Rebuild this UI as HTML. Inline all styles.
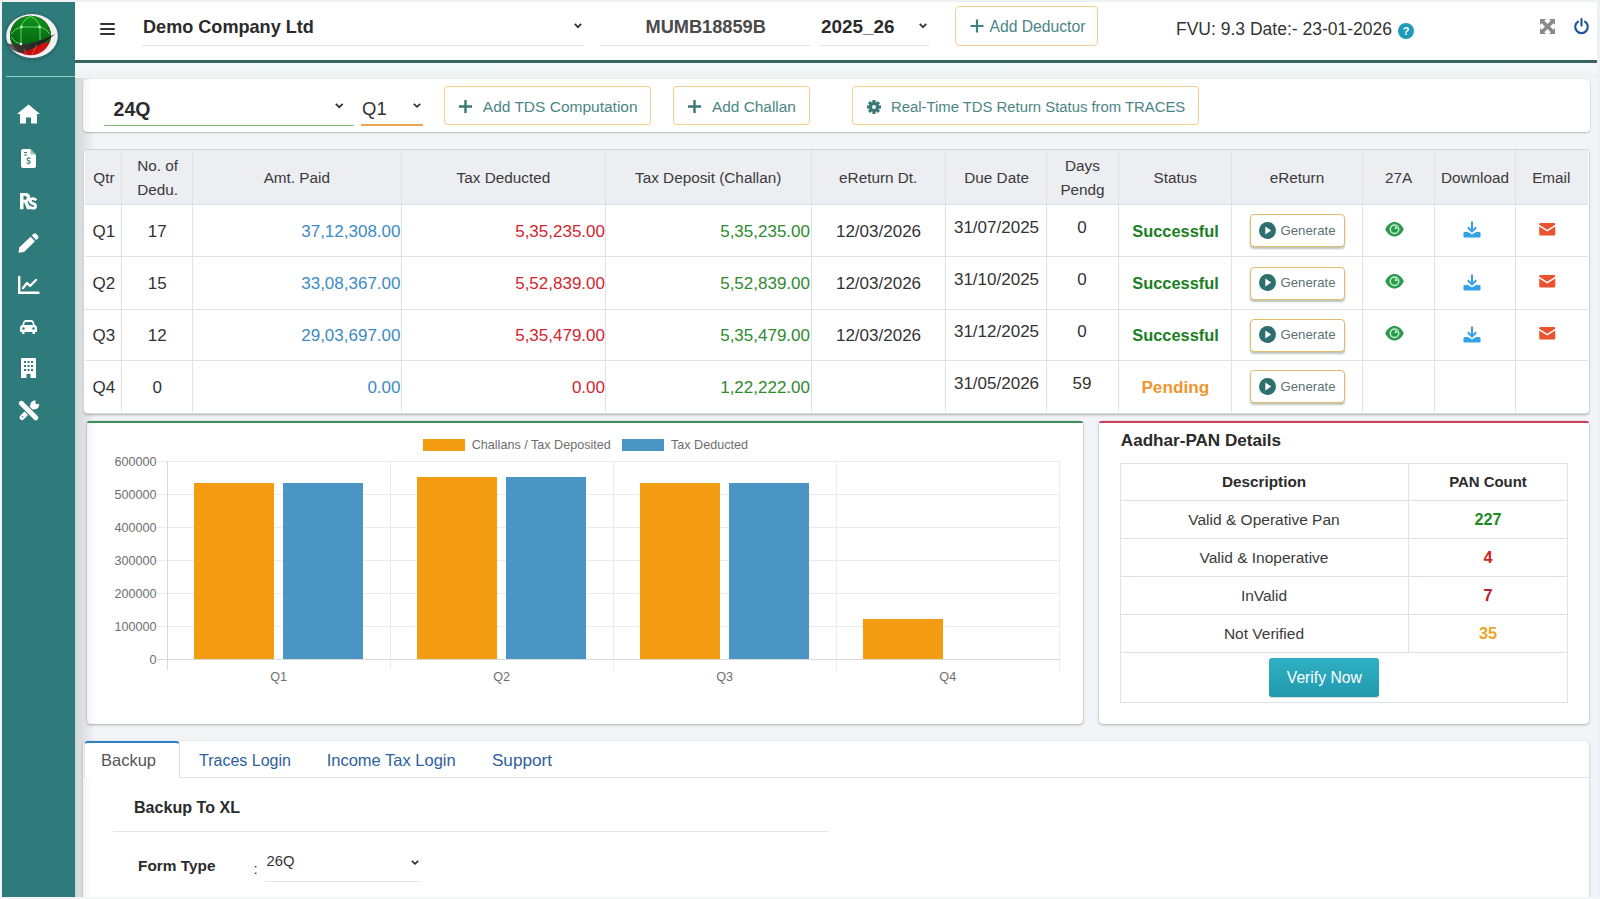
<!DOCTYPE html>
<html><head><meta charset="utf-8"><style>
*{box-sizing:border-box;margin:0;padding:0}
html,body{width:1600px;height:899px;overflow:hidden}
body{position:relative;background:#f3f4f7;font-family:"Liberation Sans",sans-serif;color:#333}
.a{position:absolute}
.t{position:absolute;white-space:nowrap;line-height:1}
svg{position:absolute;overflow:visible}
</style></head><body>
<div class="a" style="left:0px;top:0px;width:1600px;height:899px;background:#f3f4f7"></div>
<div class="a" style="left:0px;top:0px;width:1600px;height:2px;background:#eef0f2"></div>
<div class="a" style="left:75px;top:62px;width:20px;height:837px;background:linear-gradient(90deg,#b9d3d3 0,#d5d9dc 1.5px,#e2e4e7 55%,#f3f4f7)"></div>
<div class="a" style="left:75px;top:62.5px;width:1522px;height:15.5px;background:linear-gradient(#f3fafb,#eff1f3)"></div>
<div class="a" style="left:2px;top:2px;width:73px;height:897px;background:#2f7b7b"></div>
<div class="a" style="left:75px;top:2px;width:1522px;height:58px;background:#fff"></div>
<div class="a" style="left:75px;top:60px;width:1522px;height:2.799999999999997px;background:#386363"></div>
<div class="a" style="left:1597px;top:0px;width:3px;height:899px;background:#eef0f3"></div>
<div class="a" style="left:0px;top:897px;width:1600px;height:2px;background:#f1f4f5"></div>
<div class="a" style="left:6px;top:75.5px;width:69px;height:1.5px;background:#8fd0cc"></div>
<svg style="left:0;top:0" width="75" height="75" viewBox="0 0 75 75">
<defs>
<radialGradient id="gg" cx="0.45" cy="0.3" r="0.75"><stop offset="0" stop-color="#0f9a1c"/><stop offset="1" stop-color="#05610f"/></radialGradient>
<radialGradient id="rg" cx="0.6" cy="0.75" r="0.6"><stop offset="0" stop-color="#e41414"/><stop offset="1" stop-color="#7a0808"/></radialGradient>
<linearGradient id="sg" x1="0" y1="0" x2="1" y2="0"><stop offset="0" stop-color="#3d3d3d" stop-opacity="0.75"/><stop offset="0.5" stop-color="#2a2a2a"/><stop offset="1" stop-color="#1a1a1a"/></linearGradient>
<clipPath id="gc"><ellipse cx="30.5" cy="35.5" rx="20.5" ry="19.8"/></clipPath>
<filter id="bl" x="-20%" y="-20%" width="140%" height="140%"><feGaussianBlur stdDeviation="1.6"/></filter>
</defs>
<ellipse cx="32" cy="37" rx="27.5" ry="23.5" fill="#134040" opacity="0.35" filter="url(#bl)"/>
<ellipse cx="32" cy="36" rx="25.8" ry="22" fill="#f2f0f0"/>
<g clip-path="url(#gc)">
<rect x="0" y="0" width="75" height="75" fill="url(#rg)"/>
<path d="M0 0 H75 V33 Q40 49 6 44Z" fill="url(#gg)"/>
</g>
<path d="M6.5 43 Q26 49 55.5 34 Q38 48.5 20 53 Q10 50.5 6.5 43Z" fill="url(#sg)"/>
<g stroke="#86ec86" stroke-width="0.8" fill="none" opacity="0.95">
<path d="M21 44 V27 Q24 18.5 30.5 16.5 Q37 18.5 40 27 V40"/>
<path d="M21 27 H40"/>
<path d="M11 34 Q15 28.5 21 27 M40 27 Q47 29 49.5 34"/>
<path d="M11 37 Q15 43 21 44"/>
</g>
<g stroke="#f07070" stroke-width="0.7" fill="none" opacity="0.8"><path d="M24 49 L27 55 M37 44 L32 55"/></g>
<circle cx="21.5" cy="27" r="1.4" fill="#b8f5b8"/><circle cx="39.5" cy="27" r="1.4" fill="#b8f5b8"/><circle cx="21" cy="44" r="1.3" fill="#e8f8e8"/>
</svg>
<svg style="left:17px;top:104px" width="23" height="20" viewBox="0 0 23 20"><path d="M11.5 0.5 L23 10 L20 10 L20 19.5 L14 19.5 L14 13.5 L9 13.5 L9 19.5 L3 19.5 L3 10 L0 10 Z" fill="#fff"/></svg>
<svg style="left:21px;top:149px" width="15" height="19" viewBox="0 0 15 19"><path d="M2 0 H9.5 L15 5.5 V17 Q15 19 13 19 H2 Q0 19 0 17 V2 Q0 0 2 0Z" fill="#fff"/><path d="M9.5 0 V5.5 H15" fill="#2f7b7b" opacity="0.5"/><g stroke="#317d7b" stroke-width="1.1" fill="none"><path d="M3 3.5 H6 M3 6 H6"/><path d="M9.3 9.8 Q8.8 9 7.5 9 Q6 9 6 10.3 Q6 11.3 7.5 11.6 Q9.2 12 9.2 13.2 Q9.2 14.4 7.5 14.4 Q6.2 14.4 5.8 13.6 M7.5 8 V9 M7.5 14.4 V15.5"/></g></svg>
<svg style="left:20px;top:192.5px" width="17.5" height="16.5" viewBox="0 0 17.5 16.5"><path d="M0 0 H5.6 Q10.2 0 10.2 4.6 Q10.2 7.8 7.6 8.9 L11 16.3 H7 L4.3 9.5 H3.5 V16.3 H0Z M3.5 2.9 V6.8 H5.3 Q6.8 6.8 6.8 4.85 Q6.8 2.9 5.3 2.9Z" fill="#fff" fill-rule="evenodd"/><path d="M16.2 7.4 Q15.1 5.6 12.9 5.6 Q10.3 5.6 10.3 7.9 Q10.3 9.6 12.9 10.4 Q15.6 11.2 15.6 13.2 Q15.6 15.2 12.9 15.2 Q10.5 15.2 9.4 13.3" stroke="#fff" stroke-width="2.7" fill="none"/></svg>
<svg style="left:18px;top:233px" width="21" height="20" viewBox="0 0 21 20"><path d="M15.5 0.8 Q16.8 -0.3 18 0.8 L20 2.8 Q21 4 20 5.2 L18.2 7 L13.8 2.6Z" fill="#fff"/><path d="M12.6 3.8 L17 8.2 L6 19 L0.5 19.8 L1.3 14.5Z" fill="#fff"/></svg>
<svg style="left:18px;top:277px" width="21" height="17" viewBox="0 0 21 17"><path d="M1.2 0 V15.8 H20.5" stroke="#fff" stroke-width="2.4" fill="none" stroke-linecap="round"/><path d="M5 11 L9 6 L12 9 L18 3" stroke="#fff" stroke-width="2.4" fill="none" stroke-linecap="round" stroke-linejoin="round"/></svg>
<svg style="left:20px;top:320px" width="17" height="14" viewBox="0 0 17 14"><path d="M3.5 1.5 Q4 0 5.5 0 H11.5 Q13 0 13.5 1.5 L14.8 5 Q17 5.5 17 8 V12 H15 V14 H12.5 V12 H4.5 V14 H2 V12 H0 V8 Q0 5.5 2.2 5Z M4 5 H13 L12 2 H5Z" fill="#fff" fill-rule="evenodd"/><circle cx="3.5" cy="8.5" r="1.2" fill="#2f7b7b"/><circle cx="13.5" cy="8.5" r="1.2" fill="#2f7b7b"/></svg>
<svg style="left:21px;top:358px" width="15" height="20" viewBox="0 0 15 20"><path d="M1 0 H14 Q15 0 15 1 V20 H9.5 V16 H5.5 V20 H0 V1 Q0 0 1 0Z" fill="#fff"/><g fill="#2f7b7b"><rect x="3" y="3" width="2" height="2"/><rect x="6.5" y="3" width="2" height="2"/><rect x="10" y="3" width="2" height="2"/><rect x="3" y="7" width="2" height="2"/><rect x="6.5" y="7" width="2" height="2"/><rect x="10" y="7" width="2" height="2"/><rect x="3" y="11" width="2" height="2"/><rect x="6.5" y="11" width="2" height="2"/><rect x="10" y="11" width="2" height="2"/></g></svg>
<svg style="left:18px;top:400px" width="22" height="22" viewBox="0 0 22 22"><path d="M4 17.5 L15.5 6" stroke="#fff" stroke-width="5" stroke-linecap="round"/><circle cx="16.8" cy="4.8" r="4.4" fill="#fff"/><circle cx="19.6" cy="2" r="2.3" fill="#2f7b7b"/><path d="M3.3 3.3 L17.8 17.8" stroke="#2f7b7b" stroke-width="7.2" stroke-linecap="round"/><path d="M3.3 3.3 L17.8 17.8" stroke="#fff" stroke-width="5" stroke-linecap="round"/><circle cx="4.5" cy="16.8" r="0.8" fill="#2f7b7b"/></svg>
<div class="a" style="left:100px;top:23px;width:15px;height:2.1999999999999993px;background:#333;border-radius:1px"></div>
<div class="a" style="left:100px;top:28px;width:15px;height:2.1999999999999993px;background:#333;border-radius:1px"></div>
<div class="a" style="left:100px;top:33px;width:15px;height:2.200000000000003px;background:#333;border-radius:1px"></div>
<div class="t" style="left:143.00px;top:18.00px;font-size:18.1px;font-weight:bold;color:#2b2b2b;">Demo Company Ltd</div>
<div class="a" style="left:142px;top:45px;width:442px;height:1px;background:#e4e6e9"></div>
<div class="a" style="left:600px;top:45px;width:211px;height:1px;background:#e4e6e9"></div>
<div class="a" style="left:820px;top:45px;width:109px;height:1px;background:#e4e6e9"></div>
<svg style="left:573.5px;top:23.3px" width="8" height="5" viewBox="0 0 8 5"><path d="M0.8 0.8 L4.0 4.2 L7.2 0.8" stroke="#333" stroke-width="1.8" fill="none"/></svg>
<div class="t" style="left:645.50px;top:18.00px;font-size:18.2px;font-weight:bold;color:#4a4a4a;">MUMB18859B</div>
<div class="t" style="left:821.00px;top:18.00px;font-size:18.9px;font-weight:bold;color:#2b2b2b;">2025_26</div>
<svg style="left:919px;top:23.3px" width="8" height="5" viewBox="0 0 8 5"><path d="M0.8 0.8 L4.0 4.2 L7.2 0.8" stroke="#333" stroke-width="1.8" fill="none"/></svg>
<div class="a" style="left:954.5px;top:6px;width:143.5px;height:39.5px;border:1px solid #f0d08e;border-radius:4px;background:#fff"></div>
<svg style="left:969.5px;top:19px" width="14" height="14" viewBox="0 0 14 14"><path d="M7 0.5 V13.5 M0.5 7 H13.5" stroke="#3f7f7e" stroke-width="2.2"/></svg>
<div class="t" style="left:989.50px;top:19.00px;font-size:15.7px;font-weight:normal;color:#4b8584;">Add Deductor</div>
<div class="t" style="left:1176.00px;top:21.00px;font-size:17.5px;font-weight:normal;color:#333;">FVU: 9.3 Date:- 23-01-2026</div>
<svg style="left:1397.5px;top:22.5px" width="16" height="16" viewBox="0 0 16 16"><circle cx="8" cy="8" r="8" fill="#1f9ab8"/><text x="8" y="12" font-family="Liberation Sans" font-weight="bold" font-size="11" fill="#fff" text-anchor="middle">?</text></svg>
<svg style="left:1540px;top:19px" width="15" height="15" viewBox="0 0 15 15"><g fill="#8a8a8a"><path d="M0 0 H6 L4.3 1.7 L7.5 4.9 L10.7 1.7 L9 0 H15 V6 L13.3 4.3 L10.1 7.5 L13.3 10.7 L15 9 V15 H9 L10.7 13.3 L7.5 10.1 L4.3 13.3 L6 15 H0 V9 L1.7 10.7 L4.9 7.5 L1.7 4.3 L0 6Z"/></g></svg>
<svg style="left:1573.5px;top:17.8px" width="15" height="15.2" viewBox="0 0 15 15.2"><path d="M4 3.6 A6.3 6.3 0 1 0 11 3.6" stroke="#1e519e" stroke-width="2.1" fill="none" stroke-linecap="round"/><path d="M7.5 1 V7.6" stroke="#1e519e" stroke-width="2.1" stroke-linecap="round"/></svg>
<div class="a" style="left:83px;top:78.5px;width:1506.5px;height:53.5px;background:#fff;border-radius:4px;box-shadow:inset 12px 0 10px -10px rgba(0,0,0,.07),0 1px 2px rgba(0,0,0,.22),0 0 1px rgba(0,0,0,.2)"></div>
<div class="t" style="left:113.60px;top:100.00px;font-size:19.5px;font-weight:bold;color:#2b2b2b;">24Q</div>
<div class="a" style="left:104px;top:124.6px;width:249.5px;height:1.6000000000000085px;background:#86bd80"></div>
<svg style="left:335.3px;top:102.8px" width="8.5" height="5" viewBox="0 0 8.5 5"><path d="M0.8 0.8 L4.25 4.2 L7.7 0.8" stroke="#333" stroke-width="1.8" fill="none"/></svg>
<div class="t" style="left:362.00px;top:100.00px;font-size:18.5px;font-weight:normal;color:#333;">Q1</div>
<div class="a" style="left:361px;top:124.3px;width:61.60000000000002px;height:2.200000000000003px;background:#e9a553"></div>
<svg style="left:412.9px;top:102.6px" width="8" height="4.6" viewBox="0 0 8 4.6"><path d="M0.8 0.8 L4.0 3.8 L7.2 0.8" stroke="#333" stroke-width="1.8" fill="none"/></svg>
<div class="a" style="left:444px;top:86.4px;width:207.39999999999998px;height:38.3px;border:1px solid #f2d18f;border-radius:4px;background:#fff;box-shadow:0 0 1px rgba(240,200,120,.5)"></div>
<svg style="left:459px;top:99.8px" width="13" height="13" viewBox="0 0 13 13"><path d="M6.5 0 V13 M0 6.5 H13" stroke="#3a7877" stroke-width="2.4"/></svg>
<div class="t" style="left:482.80px;top:99.00px;font-size:15.5px;font-weight:normal;color:#4b8584;">Add TDS Computation</div>
<div class="a" style="left:672.8px;top:86.4px;width:137.0px;height:38.3px;border:1px solid #f2d18f;border-radius:4px;background:#fff;box-shadow:0 0 1px rgba(240,200,120,.5)"></div>
<svg style="left:688.2px;top:99.8px" width="13" height="13" viewBox="0 0 13 13"><path d="M6.5 0 V13 M0 6.5 H13" stroke="#3a7877" stroke-width="2.4"/></svg>
<div class="t" style="left:712.00px;top:99.00px;font-size:15.4px;font-weight:normal;color:#4b8584;">Add Challan</div>
<div class="a" style="left:852px;top:86.4px;width:346.79999999999995px;height:38.3px;border:1px solid #f2d18f;border-radius:4px;background:#fff;box-shadow:0 0 1px rgba(240,200,120,.5)"></div>
<svg style="left:866.5px;top:99.5px" width="14" height="14" viewBox="-7 -7 14 14"><g fill="#3a7877"><circle r="5"/><rect x="-1.6" y="-7" width="3.2" height="3.5" transform="rotate(0)"/><rect x="-1.6" y="-7" width="3.2" height="3.5" transform="rotate(45)"/><rect x="-1.6" y="-7" width="3.2" height="3.5" transform="rotate(90)"/><rect x="-1.6" y="-7" width="3.2" height="3.5" transform="rotate(135)"/><rect x="-1.6" y="-7" width="3.2" height="3.5" transform="rotate(180)"/><rect x="-1.6" y="-7" width="3.2" height="3.5" transform="rotate(225)"/><rect x="-1.6" y="-7" width="3.2" height="3.5" transform="rotate(270)"/><rect x="-1.6" y="-7" width="3.2" height="3.5" transform="rotate(315)"/></g><circle r="2" fill="#fff"/></svg>
<div class="t" style="left:891.00px;top:100.00px;font-size:14.85px;font-weight:normal;color:#4b8584;">Real-Time TDS Return Status from TRACES</div>
<div class="a" style="left:84px;top:149.5px;width:1504.5px;height:263.0px;background:#fff;border-radius:4px;box-shadow:0 0 0 1px #d3d6da,0 2px 3px rgba(0,0,0,.28)"></div>
<div class="a" style="left:84.5px;top:150px;width:1503.5px;height:54.5px;background:#eceef1;border-radius:4px 4px 0 0"></div>
<div class="a" style="left:120.8px;top:150px;width:1.0px;height:262px;background:#dfe2e5"></div>
<div class="a" style="left:191.9px;top:150px;width:1.0px;height:262px;background:#dfe2e5"></div>
<div class="a" style="left:400.8px;top:150px;width:1.0px;height:262px;background:#dfe2e5"></div>
<div class="a" style="left:605.0px;top:150px;width:1.0px;height:262px;background:#dfe2e5"></div>
<div class="a" style="left:810.5px;top:150px;width:1.0px;height:262px;background:#dfe2e5"></div>
<div class="a" style="left:945.0px;top:150px;width:1.0px;height:262px;background:#dfe2e5"></div>
<div class="a" style="left:1046.0px;top:150px;width:1.0px;height:262px;background:#dfe2e5"></div>
<div class="a" style="left:1117.5px;top:150px;width:1.0px;height:262px;background:#dfe2e5"></div>
<div class="a" style="left:1230.5px;top:150px;width:1.0px;height:262px;background:#dfe2e5"></div>
<div class="a" style="left:1362.0px;top:150px;width:1.0px;height:262px;background:#dfe2e5"></div>
<div class="a" style="left:1433.5px;top:150px;width:1.0px;height:262px;background:#dfe2e5"></div>
<div class="a" style="left:1515.0px;top:150px;width:1.0px;height:262px;background:#dfe2e5"></div>
<div class="a" style="left:84.5px;top:204.0px;width:1503.5px;height:1.0px;background:#dfe2e5"></div>
<div class="a" style="left:84.5px;top:256.2px;width:1503.5px;height:1.0px;background:#dfe2e5"></div>
<div class="a" style="left:84.5px;top:308.5px;width:1503.5px;height:1.0px;background:#dfe2e5"></div>
<div class="a" style="left:84.5px;top:360.1px;width:1503.5px;height:1.0px;background:#dfe2e5"></div>
<div class="a" style="left:84.5px;top:203.6px;width:1503.5px;height:1.5999999999999943px;background:#dcdfe3"></div>
<div class="t" style="left:-296.10px;width:800px;text-align:center;top:170.00px;font-size:15.3px;font-weight:normal;color:#3a3a3a;">Qtr</div>
<div class="t" style="left:-242.40px;width:800px;text-align:center;top:158.00px;font-size:15.3px;font-weight:normal;color:#3a3a3a;">No. of</div>
<div class="t" style="left:-242.40px;width:800px;text-align:center;top:182.00px;font-size:15.3px;font-weight:normal;color:#3a3a3a;">Dedu.</div>
<div class="t" style="left:-103.20px;width:800px;text-align:center;top:170.00px;font-size:15.3px;font-weight:normal;color:#3a3a3a;">Amt. Paid</div>
<div class="t" style="left:103.40px;width:800px;text-align:center;top:170.00px;font-size:15.3px;font-weight:normal;color:#3a3a3a;">Tax Deducted</div>
<div class="t" style="left:308.20px;width:800px;text-align:center;top:170.00px;font-size:15.3px;font-weight:normal;color:#3a3a3a;">Tax Deposit (Challan)</div>
<div class="t" style="left:478.20px;width:800px;text-align:center;top:170.00px;font-size:15.3px;font-weight:normal;color:#3a3a3a;">eReturn Dt.</div>
<div class="t" style="left:596.60px;width:800px;text-align:center;top:170.00px;font-size:15.3px;font-weight:normal;color:#3a3a3a;">Due Date</div>
<div class="t" style="left:682.50px;width:800px;text-align:center;top:158.00px;font-size:15.3px;font-weight:normal;color:#3a3a3a;">Days</div>
<div class="t" style="left:682.50px;width:800px;text-align:center;top:182.00px;font-size:15.3px;font-weight:normal;color:#3a3a3a;">Pendg</div>
<div class="t" style="left:775.30px;width:800px;text-align:center;top:170.00px;font-size:15.3px;font-weight:normal;color:#3a3a3a;">Status</div>
<div class="t" style="left:897.00px;width:800px;text-align:center;top:170.00px;font-size:15.3px;font-weight:normal;color:#3a3a3a;">eReturn</div>
<div class="t" style="left:998.50px;width:800px;text-align:center;top:170.00px;font-size:15.3px;font-weight:normal;color:#3a3a3a;">27A</div>
<div class="t" style="left:1075.00px;width:800px;text-align:center;top:170.00px;font-size:15.3px;font-weight:normal;color:#3a3a3a;">Download</div>
<div class="t" style="left:1151.30px;width:800px;text-align:center;top:170.00px;font-size:15.3px;font-weight:normal;color:#3a3a3a;">Email</div>
<div class="t" style="left:-296.20px;width:800px;text-align:center;top:223.00px;font-size:17.0px;font-weight:normal;color:#333;">Q1</div>
<div class="t" style="left:-242.70px;width:800px;text-align:center;top:223.00px;font-size:17.0px;font-weight:normal;color:#333;">17</div>
<div class="t" style="left:-399.50px;width:800px;text-align:right;top:223.00px;font-size:17.0px;font-weight:normal;color:#3d8ac4;">37,12,308.00</div>
<div class="t" style="left:-195.00px;width:800px;text-align:right;top:223.00px;font-size:17.0px;font-weight:normal;color:#d3262e;">5,35,235.00</div>
<div class="t" style="left:10.00px;width:800px;text-align:right;top:223.00px;font-size:17.0px;font-weight:normal;color:#2f8a2f;">5,35,235.00</div>
<div class="t" style="left:478.50px;width:800px;text-align:center;top:223.00px;font-size:17.0px;font-weight:normal;color:#333;">12/03/2026</div>
<div class="t" style="left:596.50px;width:800px;text-align:center;top:219.00px;font-size:17.0px;font-weight:normal;color:#333;">31/07/2025</div>
<div class="t" style="left:682.00px;width:800px;text-align:center;top:219.00px;font-size:17.0px;font-weight:normal;color:#333;">0</div>
<div class="t" style="left:775.50px;width:800px;text-align:center;top:223.00px;font-size:16.4px;font-weight:bold;color:#1a7f1f;">Successful</div>
<div class="a" style="left:1250px;top:214.4px;width:95px;height:33.0px;border:1px solid #e3bb6c;border-radius:4px;background:#fff;box-shadow:0 2px 2px rgba(60,90,60,.35)"></div>
<svg style="left:1258.5px;top:221.90px" width="17" height="17" viewBox="0 0 17 17"><circle cx="8.5" cy="8.5" r="8.5" fill="#2d6f6f"/><path d="M6.3 4.6 L12.2 8.5 L6.3 12.4Z" fill="#fff"/></svg>
<div class="t" style="left:1280.50px;top:224.00px;font-size:13.2px;font-weight:normal;color:#5a7373;">Generate</div>
<svg style="left:1385px;top:221.90px" width="19" height="14.5" viewBox="0 0 19 14.5"><path d="M0.2 7.25 C2.5 2.2 6 0 9.5 0 C13 0 16.5 2.2 18.8 7.25 C16.5 12.3 13 14.5 9.5 14.5 C6 14.5 2.5 12.3 0.2 7.25Z" fill="#2a9a4e"/><circle cx="9.5" cy="7.25" r="4.9" fill="#c8f0d0"/><circle cx="9.5" cy="7.25" r="3.5" fill="#2a9a4e"/><path d="M9.8 4.3 A3 3 0 0 1 12.5 7 L9.8 7Z" fill="#c8f0d0"/></svg>
<svg style="left:1462.5px;top:221.40px" width="18" height="17" viewBox="0 0 18 17"><path d="M9 0.5 V10" stroke="#35a2e6" stroke-width="2" /><path d="M4.8 6.3 L9 10.5 L13.2 6.3" stroke="#35a2e6" stroke-width="2" fill="none"/><path d="M0.5 12 Q0.5 11 1.5 11 H5 L9 13.5 L13 11 H16.5 Q17.5 11 17.5 12 V15.5 Q17.5 16.5 16.5 16.5 H1.5 Q0.5 16.5 0.5 15.5Z" fill="#35a2e6"/></svg>
<svg style="left:1539px;top:223.00px" width="16.5" height="12.5" viewBox="0 0 18 14"><path d="M1.5 0 H16.5 Q18 0 18 1.5 V2 L9 7.5 L0 2 V1.5 Q0 0 1.5 0Z" fill="#ea5230"/><path d="M0 4 L9 9.5 L18 4 V12.5 Q18 14 16.5 14 H1.5 Q0 14 0 12.5Z" fill="#ea5230"/></svg>
<div class="t" style="left:-296.20px;width:800px;text-align:center;top:275.00px;font-size:17.0px;font-weight:normal;color:#333;">Q2</div>
<div class="t" style="left:-242.70px;width:800px;text-align:center;top:275.00px;font-size:17.0px;font-weight:normal;color:#333;">15</div>
<div class="t" style="left:-399.50px;width:800px;text-align:right;top:275.00px;font-size:17.0px;font-weight:normal;color:#3d8ac4;">33,08,367.00</div>
<div class="t" style="left:-195.00px;width:800px;text-align:right;top:275.00px;font-size:17.0px;font-weight:normal;color:#d3262e;">5,52,839.00</div>
<div class="t" style="left:10.00px;width:800px;text-align:right;top:275.00px;font-size:17.0px;font-weight:normal;color:#2f8a2f;">5,52,839.00</div>
<div class="t" style="left:478.50px;width:800px;text-align:center;top:275.00px;font-size:17.0px;font-weight:normal;color:#333;">12/03/2026</div>
<div class="t" style="left:596.50px;width:800px;text-align:center;top:271.00px;font-size:17.0px;font-weight:normal;color:#333;">31/10/2025</div>
<div class="t" style="left:682.00px;width:800px;text-align:center;top:271.00px;font-size:17.0px;font-weight:normal;color:#333;">0</div>
<div class="t" style="left:775.50px;width:800px;text-align:center;top:275.00px;font-size:16.4px;font-weight:bold;color:#1a7f1f;">Successful</div>
<div class="a" style="left:1250px;top:266.65000000000003px;width:95px;height:33.0px;border:1px solid #e3bb6c;border-radius:4px;background:#fff;box-shadow:0 2px 2px rgba(60,90,60,.35)"></div>
<svg style="left:1258.5px;top:274.15px" width="17" height="17" viewBox="0 0 17 17"><circle cx="8.5" cy="8.5" r="8.5" fill="#2d6f6f"/><path d="M6.3 4.6 L12.2 8.5 L6.3 12.4Z" fill="#fff"/></svg>
<div class="t" style="left:1280.50px;top:276.00px;font-size:13.2px;font-weight:normal;color:#5a7373;">Generate</div>
<svg style="left:1385px;top:274.15px" width="19" height="14.5" viewBox="0 0 19 14.5"><path d="M0.2 7.25 C2.5 2.2 6 0 9.5 0 C13 0 16.5 2.2 18.8 7.25 C16.5 12.3 13 14.5 9.5 14.5 C6 14.5 2.5 12.3 0.2 7.25Z" fill="#2a9a4e"/><circle cx="9.5" cy="7.25" r="4.9" fill="#c8f0d0"/><circle cx="9.5" cy="7.25" r="3.5" fill="#2a9a4e"/><path d="M9.8 4.3 A3 3 0 0 1 12.5 7 L9.8 7Z" fill="#c8f0d0"/></svg>
<svg style="left:1462.5px;top:273.65px" width="18" height="17" viewBox="0 0 18 17"><path d="M9 0.5 V10" stroke="#35a2e6" stroke-width="2" /><path d="M4.8 6.3 L9 10.5 L13.2 6.3" stroke="#35a2e6" stroke-width="2" fill="none"/><path d="M0.5 12 Q0.5 11 1.5 11 H5 L9 13.5 L13 11 H16.5 Q17.5 11 17.5 12 V15.5 Q17.5 16.5 16.5 16.5 H1.5 Q0.5 16.5 0.5 15.5Z" fill="#35a2e6"/></svg>
<svg style="left:1539px;top:275.25px" width="16.5" height="12.5" viewBox="0 0 18 14"><path d="M1.5 0 H16.5 Q18 0 18 1.5 V2 L9 7.5 L0 2 V1.5 Q0 0 1.5 0Z" fill="#ea5230"/><path d="M0 4 L9 9.5 L18 4 V12.5 Q18 14 16.5 14 H1.5 Q0 14 0 12.5Z" fill="#ea5230"/></svg>
<div class="t" style="left:-296.20px;width:800px;text-align:center;top:327.00px;font-size:17.0px;font-weight:normal;color:#333;">Q3</div>
<div class="t" style="left:-242.70px;width:800px;text-align:center;top:327.00px;font-size:17.0px;font-weight:normal;color:#333;">12</div>
<div class="t" style="left:-399.50px;width:800px;text-align:right;top:327.00px;font-size:17.0px;font-weight:normal;color:#3d8ac4;">29,03,697.00</div>
<div class="t" style="left:-195.00px;width:800px;text-align:right;top:327.00px;font-size:17.0px;font-weight:normal;color:#d3262e;">5,35,479.00</div>
<div class="t" style="left:10.00px;width:800px;text-align:right;top:327.00px;font-size:17.0px;font-weight:normal;color:#2f8a2f;">5,35,479.00</div>
<div class="t" style="left:478.50px;width:800px;text-align:center;top:327.00px;font-size:17.0px;font-weight:normal;color:#333;">12/03/2026</div>
<div class="t" style="left:596.50px;width:800px;text-align:center;top:323.00px;font-size:17.0px;font-weight:normal;color:#333;">31/12/2025</div>
<div class="t" style="left:682.00px;width:800px;text-align:center;top:323.00px;font-size:17.0px;font-weight:normal;color:#333;">0</div>
<div class="t" style="left:775.50px;width:800px;text-align:center;top:327.00px;font-size:16.4px;font-weight:bold;color:#1a7f1f;">Successful</div>
<div class="a" style="left:1250px;top:318.6px;width:95px;height:33.0px;border:1px solid #e3bb6c;border-radius:4px;background:#fff;box-shadow:0 2px 2px rgba(60,90,60,.35)"></div>
<svg style="left:1258.5px;top:326.10px" width="17" height="17" viewBox="0 0 17 17"><circle cx="8.5" cy="8.5" r="8.5" fill="#2d6f6f"/><path d="M6.3 4.6 L12.2 8.5 L6.3 12.4Z" fill="#fff"/></svg>
<div class="t" style="left:1280.50px;top:328.00px;font-size:13.2px;font-weight:normal;color:#5a7373;">Generate</div>
<svg style="left:1385px;top:326.10px" width="19" height="14.5" viewBox="0 0 19 14.5"><path d="M0.2 7.25 C2.5 2.2 6 0 9.5 0 C13 0 16.5 2.2 18.8 7.25 C16.5 12.3 13 14.5 9.5 14.5 C6 14.5 2.5 12.3 0.2 7.25Z" fill="#2a9a4e"/><circle cx="9.5" cy="7.25" r="4.9" fill="#c8f0d0"/><circle cx="9.5" cy="7.25" r="3.5" fill="#2a9a4e"/><path d="M9.8 4.3 A3 3 0 0 1 12.5 7 L9.8 7Z" fill="#c8f0d0"/></svg>
<svg style="left:1462.5px;top:325.60px" width="18" height="17" viewBox="0 0 18 17"><path d="M9 0.5 V10" stroke="#35a2e6" stroke-width="2" /><path d="M4.8 6.3 L9 10.5 L13.2 6.3" stroke="#35a2e6" stroke-width="2" fill="none"/><path d="M0.5 12 Q0.5 11 1.5 11 H5 L9 13.5 L13 11 H16.5 Q17.5 11 17.5 12 V15.5 Q17.5 16.5 16.5 16.5 H1.5 Q0.5 16.5 0.5 15.5Z" fill="#35a2e6"/></svg>
<svg style="left:1539px;top:327.20px" width="16.5" height="12.5" viewBox="0 0 18 14"><path d="M1.5 0 H16.5 Q18 0 18 1.5 V2 L9 7.5 L0 2 V1.5 Q0 0 1.5 0Z" fill="#ea5230"/><path d="M0 4 L9 9.5 L18 4 V12.5 Q18 14 16.5 14 H1.5 Q0 14 0 12.5Z" fill="#ea5230"/></svg>
<div class="t" style="left:-296.20px;width:800px;text-align:center;top:379.00px;font-size:17.0px;font-weight:normal;color:#333;">Q4</div>
<div class="t" style="left:-242.70px;width:800px;text-align:center;top:379.00px;font-size:17.0px;font-weight:normal;color:#333;">0</div>
<div class="t" style="left:-399.50px;width:800px;text-align:right;top:379.00px;font-size:17.0px;font-weight:normal;color:#3d8ac4;">0.00</div>
<div class="t" style="left:-195.00px;width:800px;text-align:right;top:379.00px;font-size:17.0px;font-weight:normal;color:#d3262e;">0.00</div>
<div class="t" style="left:10.00px;width:800px;text-align:right;top:379.00px;font-size:17.0px;font-weight:normal;color:#2f8a2f;">1,22,222.00</div>
<div class="t" style="left:596.50px;width:800px;text-align:center;top:375.00px;font-size:17.0px;font-weight:normal;color:#333;">31/05/2026</div>
<div class="t" style="left:682.00px;width:800px;text-align:center;top:375.00px;font-size:17.0px;font-weight:normal;color:#333;">59</div>
<div class="t" style="left:775.30px;width:800px;text-align:center;top:379.00px;font-size:17.2px;font-weight:bold;color:#f0952e;">Pending</div>
<div class="a" style="left:1250px;top:370.1px;width:95px;height:33.0px;border:1px solid #e3bb6c;border-radius:4px;background:#fff;box-shadow:0 2px 2px rgba(60,90,60,.35)"></div>
<svg style="left:1258.5px;top:377.60px" width="17" height="17" viewBox="0 0 17 17"><circle cx="8.5" cy="8.5" r="8.5" fill="#2d6f6f"/><path d="M6.3 4.6 L12.2 8.5 L6.3 12.4Z" fill="#fff"/></svg>
<div class="t" style="left:1280.50px;top:380.00px;font-size:13.2px;font-weight:normal;color:#5a7373;">Generate</div>
<div class="a" style="left:87px;top:420.5px;width:996px;height:303.5px;background:#fff;border-radius:4px;box-shadow:inset 12px 0 10px -10px rgba(0,0,0,.07),0 1px 3px rgba(0,0,0,.28),0 0 1px rgba(0,0,0,.25)"></div>
<div class="a" style="left:87px;top:420.5px;width:996px;height:2.5px;background:#3b8f58;border-radius:4px 4px 0 0"></div>
<div class="a" style="left:157px;top:658.7px;width:902.8px;height:1.0px;background:#d9d9d9"></div>
<div class="t" style="left:-643.50px;width:800px;text-align:right;top:654.00px;font-size:12.6px;font-weight:normal;color:#6e6e6e;">0</div>
<div class="a" style="left:157px;top:625.7166666666667px;width:902.8px;height:1.0px;background:#ebebeb"></div>
<div class="t" style="left:-643.50px;width:800px;text-align:right;top:621.00px;font-size:12.6px;font-weight:normal;color:#6e6e6e;">100000</div>
<div class="a" style="left:157px;top:592.7333333333333px;width:902.8px;height:1.0px;background:#ebebeb"></div>
<div class="t" style="left:-643.50px;width:800px;text-align:right;top:588.00px;font-size:12.6px;font-weight:normal;color:#6e6e6e;">200000</div>
<div class="a" style="left:157px;top:559.75px;width:902.8px;height:1.0px;background:#ebebeb"></div>
<div class="t" style="left:-643.50px;width:800px;text-align:right;top:555.00px;font-size:12.6px;font-weight:normal;color:#6e6e6e;">300000</div>
<div class="a" style="left:157px;top:526.7666666666667px;width:902.8px;height:1.0px;background:#ebebeb"></div>
<div class="t" style="left:-643.50px;width:800px;text-align:right;top:522.00px;font-size:12.6px;font-weight:normal;color:#6e6e6e;">400000</div>
<div class="a" style="left:157px;top:493.7833333333333px;width:902.8px;height:1.0px;background:#ebebeb"></div>
<div class="t" style="left:-643.50px;width:800px;text-align:right;top:489.00px;font-size:12.6px;font-weight:normal;color:#6e6e6e;">500000</div>
<div class="a" style="left:157px;top:460.8px;width:902.8px;height:1.0px;background:#ebebeb"></div>
<div class="t" style="left:-643.50px;width:800px;text-align:right;top:456.00px;font-size:12.6px;font-weight:normal;color:#6e6e6e;">600000</div>
<div class="a" style="left:166.5px;top:461.3px;width:1.0px;height:208.7px;background:#d9d9d9"></div>
<div class="a" style="left:389.575px;top:461.3px;width:1.0px;height:208.7px;background:#ebebeb"></div>
<div class="a" style="left:612.65px;top:461.3px;width:1.0px;height:208.7px;background:#ebebeb"></div>
<div class="a" style="left:835.7249999999999px;top:461.3px;width:1.0px;height:208.7px;background:#ebebeb"></div>
<div class="a" style="left:1058.8px;top:461.3px;width:1.0px;height:208.7px;background:#ebebeb"></div>
<div class="a" style="left:193.77px;top:482.66px;width:80.30999999999997px;height:176.54000000000002px;background:#f39c12"></div>
<div class="a" style="left:283.0px;top:482.66px;width:80.31px;height:176.54000000000002px;background:#4b95c4"></div>
<div class="t" style="left:-121.46px;width:800px;text-align:center;top:671.00px;font-size:12.6px;font-weight:normal;color:#6e6e6e;">Q1</div>
<div class="a" style="left:416.84px;top:476.86px;width:80.31px;height:182.34000000000003px;background:#f39c12"></div>
<div class="a" style="left:506.07px;top:476.86px;width:80.31px;height:182.34000000000003px;background:#4b95c4"></div>
<div class="t" style="left:101.61px;width:800px;text-align:center;top:671.00px;font-size:12.6px;font-weight:normal;color:#6e6e6e;">Q2</div>
<div class="a" style="left:639.92px;top:482.58px;width:80.31000000000006px;height:176.62000000000006px;background:#f39c12"></div>
<div class="a" style="left:729.15px;top:482.58px;width:80.31000000000006px;height:176.62000000000006px;background:#4b95c4"></div>
<div class="t" style="left:324.69px;width:800px;text-align:center;top:671.00px;font-size:12.6px;font-weight:normal;color:#6e6e6e;">Q3</div>
<div class="a" style="left:862.99px;top:618.89px;width:80.30999999999995px;height:40.31000000000006px;background:#f39c12"></div>
<div class="t" style="left:547.76px;width:800px;text-align:center;top:671.00px;font-size:12.6px;font-weight:normal;color:#6e6e6e;">Q4</div>
<div class="a" style="left:423.4px;top:438.5px;width:42.0px;height:12.199999999999989px;background:#f39c12"></div>
<div class="t" style="left:471.70px;top:439.00px;font-size:12.6px;font-weight:normal;color:#6e6e6e;">Challans / Tax Deposited</div>
<div class="a" style="left:622px;top:438.5px;width:42px;height:12.199999999999989px;background:#4b95c4"></div>
<div class="t" style="left:671.00px;top:439.00px;font-size:12.6px;font-weight:normal;color:#6e6e6e;">Tax Deducted</div>
<div class="a" style="left:1099px;top:420.5px;width:490px;height:303.5px;background:#fff;border-radius:4px;box-shadow:0 1px 3px rgba(0,0,0,.28),0 0 1px rgba(0,0,0,.25)"></div>
<div class="a" style="left:1099px;top:420.5px;width:490px;height:2.5px;background:#c8435a;border-radius:4px 4px 0 0"></div>
<div class="t" style="left:1120.80px;top:432.00px;font-size:17.1px;font-weight:bold;color:#2b2b2b;">Aadhar-PAN Details</div>
<div class="a" style="left:1120px;top:463px;width:447.5px;height:239.5px;border:1px solid #dee2e6"></div>
<div class="a" style="left:1120.5px;top:499.6px;width:447.0px;height:1.0px;background:#dee2e6"></div>
<div class="a" style="left:1120.5px;top:537.8px;width:447.0px;height:1.0px;background:#dee2e6"></div>
<div class="a" style="left:1120.5px;top:576.0px;width:447.0px;height:1.0px;background:#dee2e6"></div>
<div class="a" style="left:1120.5px;top:614.1px;width:447.0px;height:1.0px;background:#dee2e6"></div>
<div class="a" style="left:1120.5px;top:652.0px;width:447.0px;height:1.0px;background:#dee2e6"></div>
<div class="a" style="left:1407.5px;top:463.3px;width:1.0px;height:189.2px;background:#dee2e6"></div>
<div class="t" style="left:864.00px;width:800px;text-align:center;top:474.00px;font-size:15.3px;font-weight:bold;color:#2b2b2b;">Description</div>
<div class="t" style="left:1088.00px;width:800px;text-align:center;top:475.00px;font-size:14.9px;font-weight:bold;color:#2b2b2b;">PAN Count</div>
<div class="t" style="left:864.00px;width:800px;text-align:center;top:512.00px;font-size:15.5px;font-weight:normal;color:#3a3a3a;">Valid &amp; Operative Pan</div>
<div class="t" style="left:1088.00px;width:800px;text-align:center;top:511.00px;font-size:16.3px;font-weight:bold;color:#1f8a1f;">227</div>
<div class="t" style="left:864.00px;width:800px;text-align:center;top:550.00px;font-size:15.5px;font-weight:normal;color:#3a3a3a;">Valid &amp; Inoperative</div>
<div class="t" style="left:1088.00px;width:800px;text-align:center;top:549.00px;font-size:16.3px;font-weight:bold;color:#d31f1f;">4</div>
<div class="t" style="left:864.00px;width:800px;text-align:center;top:588.00px;font-size:15.5px;font-weight:normal;color:#3a3a3a;">InValid</div>
<div class="t" style="left:1088.00px;width:800px;text-align:center;top:587.00px;font-size:16.3px;font-weight:bold;color:#b8202f;">7</div>
<div class="t" style="left:864.00px;width:800px;text-align:center;top:626.00px;font-size:15.5px;font-weight:normal;color:#3a3a3a;">Not Verified</div>
<div class="t" style="left:1088.00px;width:800px;text-align:center;top:625.00px;font-size:16.3px;font-weight:bold;color:#eea227;">35</div>
<div class="a" style="left:1269.3px;top:657.7px;width:110.0px;height:38.89999999999998px;background:linear-gradient(#2fb0c4,#2299ad);border-radius:3px;box-shadow:0 1px 1px rgba(0,0,0,.15)"></div>
<div class="t" style="left:924.30px;width:800px;text-align:center;top:670.00px;font-size:15.7px;font-weight:normal;color:#fff;">Verify Now</div>
<div class="a" style="left:83px;top:741px;width:1506px;height:164px;background:#fff;border-radius:4px;box-shadow:inset 12px 0 10px -10px rgba(0,0,0,.07),0 1px 3px rgba(0,0,0,.22),0 0 1px rgba(0,0,0,.2)"></div>
<div class="a" style="left:83px;top:776.5px;width:1506px;height:1.0px;background:#dee2e6"></div>
<div class="a" style="left:83.5px;top:741px;width:96.5px;height:36.5px;background:#fff;border:1px solid #dee2e6;border-bottom:none;border-top:2px solid #2f7fc1;border-radius:4px 4px 0 0"></div>
<div class="t" style="left:-271.50px;width:800px;text-align:center;top:752.00px;font-size:16.5px;font-weight:normal;color:#555;">Backup</div>
<div class="t" style="left:-155.00px;width:800px;text-align:center;top:753.00px;font-size:16px;font-weight:normal;color:#2e619c;">Traces Login</div>
<div class="t" style="left:-8.80px;width:800px;text-align:center;top:752.00px;font-size:16.5px;font-weight:normal;color:#2e619c;">Income Tax Login</div>
<div class="t" style="left:122.00px;width:800px;text-align:center;top:752.00px;font-size:17.2px;font-weight:normal;color:#2e619c;">Support</div>
<div class="t" style="left:134.00px;top:799.00px;font-size:16.1px;font-weight:bold;color:#2b2b2b;">Backup To XL</div>
<div class="a" style="left:112.5px;top:830.5px;width:715.0px;height:1.0px;background:#e3e5e8"></div>
<div class="t" style="left:138.00px;top:858.00px;font-size:15.4px;font-weight:bold;color:#2b2b2b;">Form Type</div>
<div class="t" style="left:253.50px;top:861.00px;font-size:15px;font-weight:normal;color:#333;">:</div>
<div class="t" style="left:266.50px;top:854.00px;font-size:14.8px;font-weight:normal;color:#333;">26Q</div>
<div class="a" style="left:265px;top:880.5px;width:155px;height:1.0px;background:#e3e5e8"></div>
<svg style="left:410.5px;top:859.5px" width="8" height="4.6" viewBox="0 0 8 4.6"><path d="M0.8 0.8 L4.0 3.8 L7.2 0.8" stroke="#333" stroke-width="1.8" fill="none"/></svg>
<div class="a" style="left:75px;top:897px;width:1525px;height:2px;background:#f3f5f6"></div>
</body></html>
